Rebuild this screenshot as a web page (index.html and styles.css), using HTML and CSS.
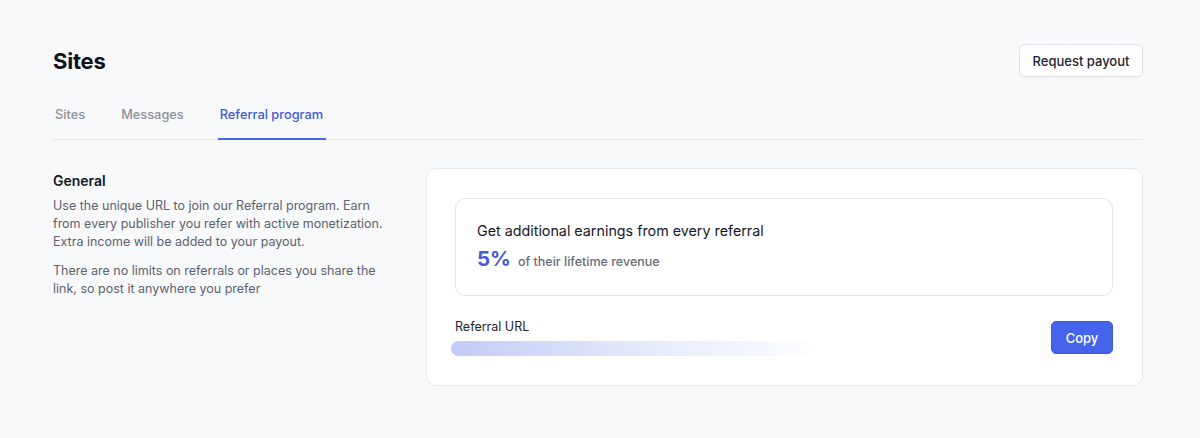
FILE: index.html
```html
<!DOCTYPE html>
<html>
<head>
<meta charset="utf-8">
<link rel="stylesheet" href="styles.css">
</head>
<body>
<div class="page">
  <header class="header">
    <h1 class="title">Sites</h1>
    <button class="btn-secondary">Request payout</button>
  </header>
  <nav class="tabs">
    <a class="tab">Sites</a>
    <a class="tab">Messages</a>
    <a class="tab active">Referral program</a>
  </nav>
  <main class="content">
    <section class="info">
      <h2 class="info-title">General</h2>
      <p>Use the unique URL to join our Referral program. Earn from every publisher you refer with active monetization. Extra income will be added to your payout.</p>
      <p>There are no limits on referrals or places you share the link, so post it anywhere you prefer</p>
    </section>
    <section class="card">
      <div class="promo">
        <div class="promo-title">Get additional earnings from every referral</div>
        <div class="promo-rate"><span class="percent">5%</span><span class="rate-text">of their lifetime revenue</span></div>
      </div>
      <div class="url-row">
        <div class="url-field">
          <div class="url-label">Referral URL</div>
          <div class="skeleton"></div>
        </div>
        <button class="btn-primary">Copy</button>
      </div>
    </section>
  </main>
</div>
</body>
</html>
```
FILE: styles.css
```css
* { box-sizing: border-box; }
html, body { margin: 0; padding: 0; }
body {
  background: #f8f9fb;
  font-family: Inter, "Noto Sans", "Liberation Sans", sans-serif;
  color: #111827;
  width: 1200px;
  height: 438px;
  overflow: hidden;
}
.page { padding: 44px 57px 0 53px; }
.header {
  display: flex;
  justify-content: space-between;
  align-items: center;
  height: 33px;
}
.title {
  margin: 0;
  font-size: 22px;
  font-weight: 700;
  color: #0f1320;
  letter-spacing: -0.2px;
}
.btn-secondary {
  height: 33px;
  width: 124px;
  background: #fff;
  border: 1px solid #dfe2e7;
  border-radius: 6px;
  font-family: inherit;
  font-size: 13px;
  font-weight: 500;
  color: #1f2430;
  box-shadow: 0 1px 2px rgba(16,24,40,0.04);
}
.tabs {
  display: flex;
  gap: 32px;
  margin-top: 20px;
  border-bottom: 1px solid #e5e7eb;
}
.tab {
  padding: 8px 2px 13px;
  line-height: 20px;
  font-size: 12.8px;
  font-weight: 500;
  color: #8c919d;
  border-bottom: 2px solid transparent;
  margin-bottom: -1px;
}
.tab.active {
  color: #3f5bd8;
  border-bottom-color: #4a63df;
  padding: 8px 3px 13px 2px;
}
.content {
  display: grid;
  grid-template-columns: 335px 1fr;
  gap: 38px;
  margin-top: 28px;
}
.info { padding-top: 4px; }
.info-title {
  margin: 0 0 7px;
  font-size: 14px;
  font-weight: 600;
  line-height: 18px;
  color: #111827;
}
.info p {
  margin: 0 0 11px;
  font-size: 12.5px;
  line-height: 18px;
  color: #5d6270;
}
.card {
  background: #fff;
  border: 1px solid #e6e8ec;
  border-radius: 10px;
  padding: 29px 29px 29px 28px;
  height: 218px;
}
.promo {
  border: 1px solid #e4e6ea;
  border-radius: 10px;
  padding: 22px 21px 22px;
  height: 98px;
}
.promo-title {
  font-size: 14.3px;
  line-height: 20px;
  color: #141824;
}
.promo-rate {
  display: flex;
  align-items: baseline;
  gap: 7px;
  margin-top: 4px;
  line-height: 28px;
}
.percent {
  font-size: 20.5px;
  font-weight: 700;
  color: #3f5bd8;
}
.rate-text {
  font-size: 12.5px;
  font-weight: 500;
  color: #686d7a;
}
.url-row {
  display: flex;
  align-items: center;
  justify-content: space-between;
  margin-top: 23px;
}
.url-field { flex: 1; }
.url-label {
  font-size: 12.5px;
  line-height: 16px;
  color: #1f2430;
  margin-bottom: 6px;
}
.skeleton {
  width: 369px;
  height: 15px;
  margin-left: -4px;
  border-radius: 8px;
  background: linear-gradient(90deg, #c2cbf6 0%, #dde3fa 40%, #f4f6fe 80%, #ffffff 100%);
}
.btn-primary {
  width: 62px;
  height: 33px;
  background: #4663ec;
  border: 1px solid #3f5bdf;
  border-radius: 5px;
  color: #fff;
  font-family: inherit;
  font-size: 13px;
  font-weight: 500;
}
```
